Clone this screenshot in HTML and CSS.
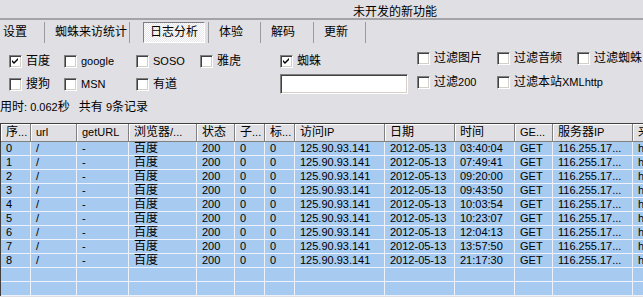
FILE: index.html
```html
<!DOCTYPE html>
<html lang="zh-CN">
<head>
<meta charset="utf-8">
<title>未开发的新功能</title>
<link rel="stylesheet" href="styles.css">
</head>
<body>
<div class="title">未开发的新功能</div>
<div class="tabs">
  <div class="tab first">设置</div>
  <div class="tab">蜘蛛来访统计</div>
  <div class="tab selwrap"><div class="sel">日志分析</div></div>
  <div class="tab">体验</div>
  <div class="tab">解码</div>
  <div class="tab">更新</div>
</div>
<div class="filters">
  <div class="engines">
    <label class="opt"><span class="cb"><svg viewBox="0 0 11 11" width="11" height="11"><polygon points="2,4 4,6 8,2 8,4 4,8 2,6"/></svg></span><span>百度</span></label>
    <label class="opt"><span class="cb"></span><span class="e">google</span></label>
    <label class="opt"><span class="cb"></span><span class="e">SOSO</span></label>
    <label class="opt"><span class="cb"></span><span>雅虎</span></label>
    <label class="opt"><span class="cb"></span><span>搜狗</span></label>
    <label class="opt"><span class="cb"></span><span class="e">MSN</span></label>
    <label class="opt"><span class="cb"></span><span>有道</span></label>
  </div>
  <div class="spider">
    <label class="opt"><span class="cb"><svg viewBox="0 0 11 11" width="11" height="11"><polygon points="2,4 4,6 8,2 8,4 4,8 2,6"/></svg></span><span>蜘蛛</span></label>
    <div class="input"></div>
  </div>
  <div class="opts">
    <label class="opt"><span class="cb"></span><span>过滤图片</span></label>
    <label class="opt"><span class="cb"></span><span>过滤音频</span></label>
    <label class="opt"><span class="cb"></span><span>过滤蜘蛛</span></label>
    <label class="opt"><span class="cb"></span><span>过滤<span class="e">200</span></span></label>
    <label class="opt"><span class="cb"></span><span>过滤本站<span class="e">XMLhttp</span></span></label>
  </div>
</div>
<div class="status">用时<span class="e">: 0.062</span>秒<span class="e">&nbsp;&nbsp;&nbsp;</span>共有<span class="e"> 9</span>条记录</div>
<div class="list">
  <div class="row hd">
    <span><b class="c">序</b>...</span><span>url</span><span>getURL</span><span><b class="c">浏览器</b>/...</span><span><b class="c">状态</b></span><span><b class="c">子</b>...</span><span><b class="c">标</b>...</span><span><b class="c">访问</b>IP</span><span><b class="c">日期</b></span><span><b class="c">时间</b></span><span>GE...</span><span><b class="c">服务器</b>IP</span><span><b class="c">来路</b></span>
  </div>
  <div class="row dr"><span>0</span><span>/</span><span>-</span><span><b class="c">百度</b></span><span>200</span><span>0</span><span>0</span><span>125.90.93.141</span><span>2012-05-13</span><span>03:40:04</span><span>GET</span><span>116.255.17...</span><span>http://</span></div>
  <div class="row dr"><span>1</span><span>/</span><span>-</span><span><b class="c">百度</b></span><span>200</span><span>0</span><span>0</span><span>125.90.93.141</span><span>2012-05-13</span><span>07:49:41</span><span>GET</span><span>116.255.17...</span><span>http://</span></div>
  <div class="row dr"><span>2</span><span>/</span><span>-</span><span><b class="c">百度</b></span><span>200</span><span>0</span><span>0</span><span>125.90.93.141</span><span>2012-05-13</span><span>09:20:00</span><span>GET</span><span>116.255.17...</span><span>http://</span></div>
  <div class="row dr"><span>3</span><span>/</span><span>-</span><span><b class="c">百度</b></span><span>200</span><span>0</span><span>0</span><span>125.90.93.141</span><span>2012-05-13</span><span>09:43:50</span><span>GET</span><span>116.255.17...</span><span>http://</span></div>
  <div class="row dr"><span>4</span><span>/</span><span>-</span><span><b class="c">百度</b></span><span>200</span><span>0</span><span>0</span><span>125.90.93.141</span><span>2012-05-13</span><span>10:03:54</span><span>GET</span><span>116.255.17...</span><span>http://</span></div>
  <div class="row dr"><span>5</span><span>/</span><span>-</span><span><b class="c">百度</b></span><span>200</span><span>0</span><span>0</span><span>125.90.93.141</span><span>2012-05-13</span><span>10:23:07</span><span>GET</span><span>116.255.17...</span><span>http://</span></div>
  <div class="row dr"><span>6</span><span>/</span><span>-</span><span><b class="c">百度</b></span><span>200</span><span>0</span><span>0</span><span>125.90.93.141</span><span>2012-05-13</span><span>12:04:13</span><span>GET</span><span>116.255.17...</span><span>http://</span></div>
  <div class="row dr"><span>7</span><span>/</span><span>-</span><span><b class="c">百度</b></span><span>200</span><span>0</span><span>0</span><span>125.90.93.141</span><span>2012-05-13</span><span>13:57:50</span><span>GET</span><span>116.255.17...</span><span>http://</span></div>
  <div class="row dr"><span>8</span><span>/</span><span>-</span><span><b class="c">百度</b></span><span>200</span><span>0</span><span>0</span><span>125.90.93.141</span><span>2012-05-13</span><span>21:17:30</span><span>GET</span><span>116.255.17...</span><span>http://</span></div>
  <div class="row dr"><span></span><span></span><span></span><span></span><span></span><span></span><span></span><span></span><span></span><span></span><span></span><span></span><span></span></div>
  <div class="row dr"><span></span><span></span><span></span><span></span><span></span><span></span><span></span><span></span><span></span><span></span><span></span><span></span><span></span></div>
</div>
</body>
</html>
```
FILE: styles.css
```css
* { box-sizing: border-box; }
html, body { margin: 0; padding: 0; }
body {
  width: 643px;
  height: 297px;
  overflow: hidden;
  background: #e0dfe3;
  color: #000;
  font-family: "Liberation Sans", "Noto Sans CJK SC", sans-serif;
  font-size: 12px;
}
.e { font-size: 11px; }
.c { font-size: 12px; font-weight: normal; }

.title {
  height: 20px;
  padding: 5px 0 0 353px;
  line-height: 14px;
  border-bottom: 2px solid #a4a4a8;
}

.tabs {
  display: grid;
  grid-template-columns: 45px 85px 79px 52px 53px 52px;
  height: 24px;
  padding-top: 2px;
}
.tab {
  height: 21px;
  line-height: 21px;
  padding-left: 10px;
  white-space: nowrap;
  border-right: 1px solid #9c9ca0;
}
.tab.first { padding-left: 3px; }
.tab.selwrap { padding: 0 3px 0 13px; }
.sel {
  height: 21px;
  line-height: 19px;
  text-align: center;
  border: 1px solid;
  border-color: #808080 #fff #fff #808080;
  background: repeating-conic-gradient(#fff 0 25%, #e6e5e9 0 50%) 0 0 / 2px 2px;
}

.filters {
  display: flex;
  height: 54px;
  padding: 11px 0 0 9px;
}
.filters > div { flex: none; }
.engines {
  display: grid;
  grid-template-columns: 55px 72px 64px 80px;
  grid-auto-rows: 23px;
}
.opt {
  display: flex;
  align-items: flex-start;
  gap: 4px;
  height: 13px;
  line-height: 13px;
  white-space: nowrap;
}
.cb {
  flex: none;
  width: 13px;
  height: 13px;
  background: #fff;
  border: 1px solid;
  border-color: #808080 #fff #fff #808080;
  box-shadow: inset 1px 1px #404040, inset -1px -1px #d4d0c8;
}
.cb svg { display: block; fill: #000; }
.spider {
  width: 137px;
}
.input {
  width: 128px;
  height: 20px;
  margin-top: 6px;
  background: #fff;
  border: 1px solid;
  border-color: #808080 #fff #fff #808080;
  box-shadow: inset 1px 1px #404040, inset -1px -1px #d4d0c8;
}
.opts {
  display: grid;
  grid-template-columns: 80px 80px 80px;
  grid-auto-rows: 24px;
  margin-top: -3px;
}

.status {
  height: 25px;
  line-height: 18px;
  white-space: nowrap;
}

.list {
  width: 643px;
  overflow: hidden;
  border-top: 1px solid #404040;
  border-left: 1px solid #404040;
}
.row {
  display: grid;
  grid-template-columns: 30px 46px 52px 68px 38px 30px 30px 90px 70px 60px 38px 80px 80px;
  width: 712px;
}
.row span {
  padding-left: 5px;
  white-space: nowrap;
  overflow: hidden;
  font-size: 11px;
}
.hd span {
  height: 18px;
  line-height: 17px;
  background: #e0dfe3;
  border-right: 1px solid #808080;
  border-bottom: 1px solid #808080;
  box-shadow: inset 1px 1px #fff;
}
.dr span {
  height: 14px;
  line-height: 13px;
  background: #a6caf0;
  border-right: 1px solid #eef3fb;
  border-bottom: 1px solid #eef3fb;
}
```
